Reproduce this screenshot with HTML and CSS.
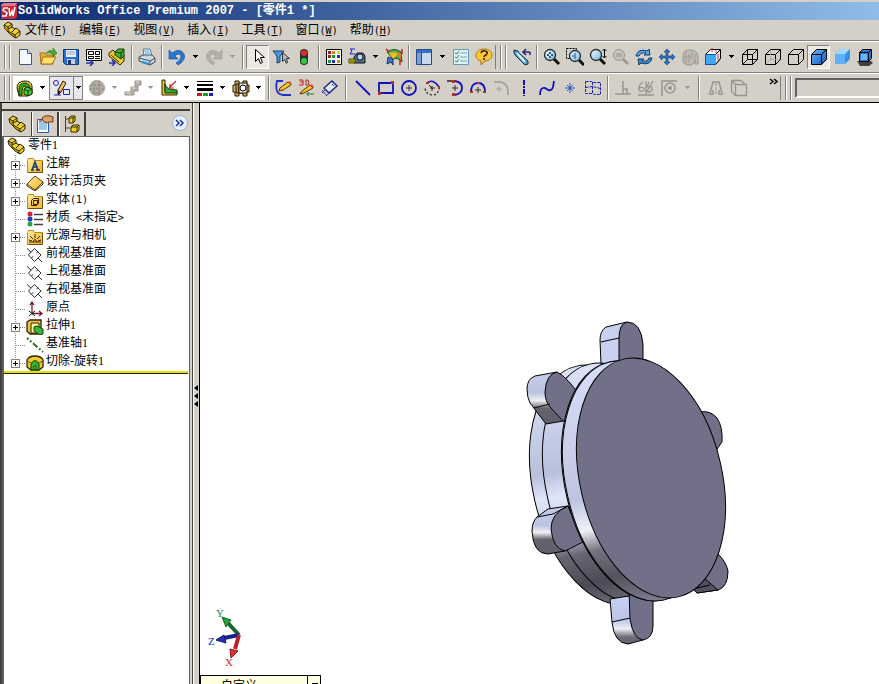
FILE: index.html
```html
<!DOCTYPE html>
<html lang="zh-CN">
    <head>
        <meta charset="UTF-8">
        <meta name="viewport" content="width=device-width, initial-scale=1.0">
        <title>SolidWorks Office Premium 2007</title>
        <link rel="stylesheet" href="styles.css">
    </head>
    <body>
        <svg class="defs" width="0" height="0" aria-hidden="true">
            <defs>
                <linearGradient id="gold" x1="0" y1="0" x2="1" y2="1"><stop offset="0" stop-color="#fff0a0"/><stop offset="1" stop-color="#f0b020"/></linearGradient>
                <linearGradient id="glass" x1="0" y1="0" x2="1" y2="1"><stop offset="0" stop-color="#f4fcff"/><stop offset="1" stop-color="#78b4dc"/></linearGradient>
                <linearGradient id="blue" x1="0" y1="0" x2="1" y2="1"><stop offset="0" stop-color="#68b4f8"/><stop offset="1" stop-color="#1458c0"/></linearGradient>
            </defs>
            <symbol id="part" viewBox="0 0 18 18">
                <path d="M1 4l4-3 4 2v3l3 2 1-1 4 3v4l-4 3-5-3-6-6z" fill="#f0d030" stroke="#282000"/>
                <path d="M1 4l4 2 4-3M5 6v4l7 4 5-4M5 8l4-2M12 14v3M9 11l3-3" fill="none" stroke="#282000"/>
                <path d="M2 6l2 1v3l-2-2zM6 11l5 3v1l-5-3z" fill="#a88000"/>
            </symbol>
            <symbol id="caret" viewBox="0 0 7 4"><path d="M1 0h5v1H5v1H4v1H3V2H2V1H1z"/></symbol>
            <symbol id="folder" viewBox="0 0 18 16">
                <path d="M1.500 3.500l1-2h5l1 2h8v12h-15z" fill="url(#gold)" stroke="#c08818"/>
                <path d="M2 15.500h14.500V4" fill="none" stroke="#705010"/>
            </symbol>
            <symbol id="plane" viewBox="0 0 18 16">
                <path d="M2.500 8l6-6.500 6.500 6.500-6.500 6.500z" fill="#fff" stroke="#303030"/>
                <path d="M1 1.500l4 3.500M12 11l4 4M5.500 11l6.500-6.500" fill="none" stroke="#303030"/>
                <path d="M6 8l3-3 3 3-3 3z" fill="#fff"/>
            </symbol>
            <symbol id="cube" viewBox="0 0 18 18"><path d="M1.500 6.500l5-5h10v10l-5 5h-10zM1.500 6.500h10v10M11.500 6.500l5-5" stroke="currentColor"/></symbol>
            <symbol id="lens" viewBox="0 0 18 18">
                <path d="M11 11l5 5" stroke="#101010" stroke-width="3"/>
                <circle cx="7" cy="7" r="5.500" fill="url(#glass)" stroke="#182838" stroke-width="1.300"/>
            </symbol>
        </svg>

        <header class="titlebar">
            <svg width="16" height="16" viewBox="0 0 16 16"><path d="M0 2l3-2h13v14l-2 2H0z" fill="#c82838"/><path d="M0 2l3-2h13l-2 3H0z" fill="#e87880"/><path d="M7 5H3L2 7l4 3-1 3H1M8 5l1 8 2-5 1 5 2-9" fill="none" stroke="#fff" stroke-width="1.500"/></svg>
            <h1>SolidWorks Office Premium 2007 - [零件1 *]</h1>
        </header>

        <nav class="menubar">
            <svg width="18" height="18"><use href="#part"/></svg>
            <button>文件<span class="key">(<u>F</u>)</span></button>
            <button>编辑<span class="key">(<u>E</u>)</span></button>
            <button>视图<span class="key">(<u>V</u>)</span></button>
            <button>插入<span class="key">(<u>I</u>)</span></button>
            <button>工具<span class="key">(<u>T</u>)</span></button>
            <button>窗口<span class="key">(<u>W</u>)</span></button>
            <button>帮助<span class="key">(<u>H</u>)</span></button>
        </nav>

        <!-- standard + view toolbars -->
        <div class="toolbar">
            <div class="grip"></div>
            <button class="tool" aria-label="新建"><svg viewBox="0 0 18 18"><path d="M3.500 1.500h8l4 4v11h-12z" fill="#f4f8ff" stroke="#405880"/><path d="M11.500 1.500v4h4" fill="#c8d8f0" stroke="#405880"/></svg></button>
            <button class="tool" aria-label="打开"><svg viewBox="0 0 18 18"><path d="M1 5h5l1 2h7v9H2z" fill="#e8b030" stroke="#a87010"/><path d="M4 9h13l-4 7H2z" fill="#ffe070" stroke="#a87010"/><path d="M7 5q3-4 7-2V0l4 5-4 4V6q-4-2-7-1z" fill="#40b028" stroke="#207010" stroke-width=".5"/></svg></button>
            <button class="tool" aria-label="保存"><svg viewBox="0 0 18 18"><path d="M1.500 1.500h15v15h-13l-2-2z" fill="#2870d0" stroke="#103880"/><path d="M4 2h10v7H4z" fill="#e8f0ff"/><path d="M5 4h8M5 6h8" stroke="#90a8d0"/><path d="M5 11h8v5H5z" fill="#c8d0e0"/><path d="M6 12h3v4H6z" fill="#183878"/></svg></button>
            <button class="tool" aria-label="从零件制作工程图"><svg viewBox="0 0 18 18"><path d="M1.500 1.500h15v11h-15z" fill="#fff" stroke="#000"/><path d="M3.500 3.500h5v3h-5zM10.500 3.500h4v3h-4zM3.500 8.500h5v2h-5zM10 8.500h5M10 10.500h5" fill="#fff" stroke="#000"/><path d="M1 15h6M5 12l3 3-3 3" fill="none" stroke="#2030b0" stroke-width="1.500"/></svg></button>
            <button class="tool" aria-label="从零件制作装配体"><svg viewBox="0 0 18 18"><path d="M1 5l4-3 6 6 5-1v6l-4 4-11-9z" fill="#f0c828" stroke="#302000"/><path d="M7 4l3-3h6v7l-3 3-6-4z" fill="#48b030" stroke="#104008"/><path d="M7 4l6 1v6M13 5l3-4M3 7l8 7" fill="none" stroke="#104008"/><path d="M1 15h5M4 12l3 3-3 3" fill="none" stroke="#2030b0" stroke-width="1.500"/></svg></button>
            <div class="sep"></div>
            <button class="tool" aria-label="打印"><svg viewBox="0 0 18 18"><path d="M6 8l-1-7h7l2 7" fill="#e8f8ff" stroke="#5080a0"/><path d="M6 3h5M7 5h5" stroke="#58a0d0"/><path d="M1 9l4-2h9l3 3v4l-5 3-11-4z" fill="#c8d8e0" stroke="#405060"/><path d="M1 10l11 3 5-3M12 13v4" fill="none" stroke="#405060"/><path d="M4 14l7 2" stroke="#2890d0" stroke-width="2"/></svg></button>
            <div class="sep"></div>
            <button class="tool" aria-label="撤消"><svg viewBox="0 0 18 18"><path d="M1 2l3 3q5-4 9-2 5 3 3 8-2 4-6 6l-2-2q5-3 5-7-2-4-6 0l3 3H1z" fill="#2878d0" stroke="#1850a0" stroke-width=".7"/></svg></button>
            <button class="drop" aria-label="撤消列表"><svg><use href="#caret"/></svg></button>
            <button class="tool" aria-label="重做" disabled><svg viewBox="0 0 18 18"><path d="M17 2l-3 3q-5-4-9-2-5 3-3 8 2 4 6 6l2-2q-5-3-5-7 2-4 6 0l-3 3h9z" fill="#b4b0a8" stroke="#a09c94" stroke-width=".7"/></svg></button>
            <button class="drop" aria-label="重做列表" disabled><svg><use href="#caret"/></svg></button>
            <div class="sep"></div>
            <button class="tool pressed" aria-label="选择"><svg viewBox="0 0 18 18"><path d="M6.500 1.500v12l3-3 2 5 2-1-2-5h4z" fill="#fff" stroke="#000"/></svg></button>
            <button class="tool" aria-label="选择过滤器"><svg viewBox="0 0 18 18"><path d="M1 3h11l-4 5v6l-3 1V8z" fill="#4898d8" stroke="#104080"/><path d="M10.500 4.500v9l2-2 2 4 1-1-1-4h3z" fill="#b0b8c0" stroke="#303030"/></svg></button>
            <button class="tool" aria-label="重建模型"><svg viewBox="0 0 18 18"><rect x="5" y="1" width="8" height="16" rx="4" fill="#283028"/><circle cx="9" cy="5" r="3" fill="#d83030"/><circle cx="9" cy="13" r="3" fill="#30c840"/></svg></button>
            <div class="sep"></div>
            <button class="tool" aria-label="编辑颜色"><svg viewBox="0 0 18 18"><path d="M1.500 1.500h15v15h-15z" fill="#fff" stroke="#000"/><path d="M3 3h3v3H3zM3 7h3v3H3z" fill="#a02020"/><path d="M7 3h3v3H7zM12 12h3v3h-3z" fill="#e08010"/><path d="M12 3h3v3h-3z" fill="#e0d020"/><path d="M7 7h3v3H7zM3 12h3v3H3z" fill="#10a030"/><path d="M12 7h3v3h-3zM7 12h3v3H7z" fill="#2030d0"/></svg></button>
            <button class="tool" aria-label="测量"><svg viewBox="0 0 18 18"><path d="M7 1H2l2 2-2 3h5" fill="none" stroke="#2020c0"/><path d="M6 9l3-4h6l2 3v7H6z" fill="#506880" stroke="#101820"/><circle cx="12" cy="9" r="3" fill="#b8d8f0" stroke="#101820"/><path d="M1 11h6v4H1z" fill="#e8d020" stroke="#404000"/><path d="M3 12v2M5 12v2" stroke="#404000"/></svg></button>
            <button class="drop" aria-label="测量列表"><svg><use href="#caret"/></svg></button>
            <button class="tool" aria-label="曲面分析"><svg viewBox="0 0 18 18"><path d="M2 4q7-5 14 0l1 10q-4-5-9-3z" fill="#48b048" stroke="#205020"/><path d="M4 5q6-2 9 1l-5 5z" fill="#f0c020"/><path d="M11 4l5 2v7z" fill="#e08020"/><path d="M1 1l3 3M17 1v5M15 11v6" stroke="#c02020" stroke-width="1.500"/><path d="M3 9l5 2v6l-2-3-4 2z" fill="#4078d0" stroke="#203060"/></svg></button>
            <div class="sep"></div>
            <button class="tool" aria-label="窗格"><svg viewBox="0 0 18 18"><path d="M1.500 1.500h15v15h-15z" fill="#c8d8f0" stroke="#284880"/><path d="M2 2h14v3H2z" fill="#3870c0"/><path d="M2 5h4v11H2z" fill="#78a0d8"/><path d="M6.500 5v11" stroke="#284880"/></svg></button>
            <button class="drop" aria-label="窗格列表"><svg><use href="#caret"/></svg></button>
            <button class="tool" aria-label="选项"><svg viewBox="0 0 18 18"><path d="M1.500 1.500h15v15h-15z" fill="#e0f0f8" stroke="#6898b8"/><path d="M3 5l2 1 2-3M3 9l2 1 2-3M3 13l2 1 2-3" fill="none" stroke="#289048"/><path d="M8 5h7M8 9h7M8 13h7" stroke="#70a0c0"/></svg></button>
            <button class="tool" aria-label="帮助"><svg viewBox="0 0 18 18"><path d="M9 1c10 0 11 11 1 12l-4 4v-4C-2 11 0 1 9 1z" fill="#f8c838" stroke="#a87010"/><path d="M6 5q1-3 4-2 4 1 1 4-2 1-2 2M9 10v2" fill="none" stroke="#402000" stroke-width="1.700"/></svg></button>
            <div class="grip raised"></div>
            <button class="tool" aria-label="上一视图"><svg viewBox="0 0 18 18"><path d="M1 2l4 1 1 2 9 8v3l-3 1-9-9-2-3z" fill="#58a0d0" stroke="#102840"/><path d="M4 5l8 9" stroke="#d0f0ff" stroke-width="2"/><path d="M17 4h-6M13 1l-3 3 3 3M17 4v3" fill="none" stroke="#282878" stroke-width="1.500"/></svg></button>
            <div class="sep"></div>
            <button class="tool" aria-label="整屏显示全图"><svg viewBox="0 0 18 18"><use href="#lens"/><path d="M5 5h4v4H5z" fill="#c8e8f8"/><path d="M7 4v2M7 8v2M4 7h2M8 7h2" stroke="#183048" stroke-width="1.500"/></svg></button>
            <button class="tool" aria-label="局部放大"><svg viewBox="0 0 18 18"><path d="M.5.500h10v10H.5z" fill="none" stroke="#000" stroke-dasharray="2 1"/><g transform="translate(2 1)"><use href="#lens" width="18" height="18"/></g><path d="M9 5v6M6 8h2" stroke="#185080"/></svg></button>
            <button class="tool" aria-label="放大或缩小"><svg viewBox="0 0 18 18"><use href="#lens"/><path d="M15.500 1v9M13.500 3l2-2 2 2M13.500 8l2 2 2-2" fill="none" stroke="#000"/></svg></button>
            <button class="tool" aria-label="放大选取范围" disabled><svg viewBox="0 0 18 18"><path d="M11 11l5 5" stroke="#a09c94" stroke-width="3"/><circle cx="7" cy="7" r="5.500" fill="#c8c4bc" stroke="#989488"/><path d="M4 6h6M4 8h6" stroke="#989488"/></svg></button>
            <button class="tool" aria-label="旋转视图"><svg viewBox="0 0 18 18"><path d="M1 8q2-8 11-5l2-2 1 6H9l2-2Q5 4 4 8z" fill="#58a8e8" stroke="#103868"/><path d="M17 10q-2 8-11 5l-2 2-1-6h6l-2 2q6 1 7-3z" fill="#3888d0" stroke="#103868"/></svg></button>
            <button class="tool" aria-label="平移"><svg viewBox="0 0 18 18"><path d="M9 1l3 3h-2v4h4V6l3 3-3 3v-2h-4v4h2l-3 3-3-3h2v-4H4v2L1 9l3-3v2h4V4H6z" fill="#2878c8" stroke="#103868" stroke-width=".6"/></svg></button>
            <button class="tool" aria-label="三维工程图视图" disabled><svg viewBox="0 0 18 18"><path d="M2 8q0-6 7-6t8 6v8h-3v-4l-3 5H6L2 14z" fill="#c0bcb4" stroke="#989488"/><path d="M5 4v11M8 6v9M11 4v7M14 6v7M2 9h9" stroke="#a09c94"/></svg></button>
            <button class="tool" aria-label="标准视图"><svg viewBox="0 0 18 18"><path d="M1.500 6.500l5-5h10v9l-5 6h-10z" fill="#fff" stroke="#000"/><path d="M1.500 6.500h10v10h-10z" fill="#40a8f8" stroke="#1050b0"/><path d="M11.500 6.500l5-5v9l-5 6" fill="#d8e8f8" stroke="#000"/><path d="M8 0v4M12 2v3M14 6v6" stroke="#e03040"/></svg></button>
            <button class="drop" aria-label="标准视图列表"><svg><use href="#caret"/></svg></button>
            <button class="tool" aria-label="线架图"><svg viewBox="0 0 18 18" fill="none"><use href="#cube"/><path d="M6.500 2v9.500h10M6.500 11.500l-5 5" stroke="#000"/></svg></button>
            <button class="tool" aria-label="隐藏线可见"><svg viewBox="0 0 18 18" fill="none"><use href="#cube"/><path d="M6.500 2v9.500h10M6.500 11.500l-5 5" stroke="#888" stroke-dasharray="1 1"/></svg></button>
            <button class="tool" aria-label="消除隐藏线"><svg viewBox="0 0 18 18" fill="none"><use href="#cube"/></svg></button>
            <button class="tool pressed" aria-label="带边线上色"><svg viewBox="0 0 18 18" fill="url(#blue)"><use href="#cube"/></svg></button>
            <button class="tool" aria-label="上色"><svg viewBox="0 0 18 18"><path d="M2 6l5-5h10v10l-5 5H2z" fill="#3890e8"/><path d="M2 6l5-5h10l-5 5z" fill="#a0d8ff"/><path d="M2 6h10v10H2z" fill="#60b0f8"/></svg></button>
            <button class="tool" aria-label="上色模式中的阴影"><svg viewBox="0 0 18 18"><path d="M1 13h14l2 2-4 3H4z" fill="#404040"/><path d="M3.500 4.500l3-3h9v9l-3 3h-9z" fill="#2878d0" stroke="#000"/><path d="M3.500 4.500h9v9M12.500 4.500l3-3" fill="none" stroke="#000"/><path d="M5 6h6v6H5z" fill="#68b8f8"/></svg></button>
        </div>

        <!-- command manager + sketch toolbars -->
        <div class="toolbar second">
            <div class="grip"></div>
            <div class="manager">
                <div class="pair">
                    <button class="tool" aria-label="特征"><svg viewBox="0 0 18 18"><path d="M1 9q0-7 8-7 6 0 7 5v8l-5 2H3z" fill="#f0d030" stroke="#202000"/><path d="M3 10q0-6 6-6 5 1 5 5l-4 1q0-3-2-3-2 1-2 5v4H3z" fill="#38a028" stroke="#083808"/><path d="M8 10l3-2 5 2v5l-4 2-4-2z" fill="#58c840" stroke="#083808"/><path d="M8 10l4 2v5M12 12l4-2" fill="none" stroke="#083808"/></svg></button>
                    <button class="drop" aria-label="特征列表"><svg><use href="#caret"/></svg></button>
                </div>
                <div class="pair active">
                    <button class="tool" aria-label="草图"><svg viewBox="0 0 18 18"><circle cx="4" cy="4" r="2.500" fill="none" stroke="#2020c0"/><path d="M11.500 10.500h6v5h-6zM2 16h7" fill="none" stroke="#2020c0"/><path d="M6 11l5-9 3 2-5 9-3 3z" fill="#f0c060" stroke="#301800"/><path d="M6 11l3 2-3 3z" fill="#301800"/></svg></button>
                    <button class="drop" aria-label="草图列表"><svg><use href="#caret"/></svg></button>
                </div>
                <div class="pair">
                    <button class="tool" aria-label="曲面" disabled><svg viewBox="0 0 18 18"><circle cx="9" cy="9" r="7.500" fill="#b0aca4" stroke="#989488" stroke-dasharray="3 1"/><path d="M3 6h12M2 10h14M5 14h8M6 2v14M11 2v14" stroke="#8c887c" stroke-dasharray="2 1"/></svg></button>
                    <button class="drop" aria-label="曲面列表" disabled><svg><use href="#caret"/></svg></button>
                </div>
                <div class="pair">
                    <button class="tool" aria-label="钣金" disabled><svg viewBox="0 0 18 18"><path d="M1 13h6V8h4V2h6v4h-3v6h-4v4H1z" fill="#b4b0a8" stroke="#989488"/><path d="M12 3h3M8 9h3M2 14h5" stroke="#e8e4dc"/></svg></button>
                    <button class="drop" aria-label="钣金列表" disabled><svg><use href="#caret"/></svg></button>
                </div>
                <div class="pair">
                    <button class="tool" aria-label="模具工具"><svg viewBox="0 0 18 18"><path d="M2 1h3v12h12v3H2z" fill="#e8c820" stroke="#302800"/><path d="M5 5q1 6 12 6v3H5z" fill="#38a830" stroke="#083808"/><path d="M9 9l7-7M10 5v4h4" fill="none" stroke="#d02020" stroke-width="1.200"/></svg></button>
                    <button class="drop" aria-label="模具列表"><svg><use href="#caret"/></svg></button>
                </div>
                <div class="pair">
                    <button class="tool" aria-label="线型"><svg viewBox="0 0 18 18"><path d="M1 2.500h16" stroke="#000"/><path d="M1 6h16" stroke="#000" stroke-width="2"/><path d="M1 10.500h16" stroke="#000" stroke-width="3"/><path d="M1 14h5v3H1z" fill="#c02020"/><path d="M7 14h5v3H7z" fill="#20a020"/><path d="M13 14h4v3h-4z" fill="#2020c0"/></svg></button>
                    <button class="drop" aria-label="线型列表"><svg><use href="#caret"/></svg></button>
                </div>
                <div class="pair">
                    <button class="tool" aria-label="装配体"><svg viewBox="0 0 18 18"><path d="M3 2h4v3h4V2h4v4h2v7h-2v4h-4v-3H7v3H3v-4H1V6h2z" fill="#e0b060" stroke="#201800"/><path d="M4 5h3v9H4z" fill="#b89058" stroke="#201800"/><path d="M7 4h8v10H7z" fill="#e8e8e8" stroke="#201800"/><circle cx="11" cy="9" r="3" fill="#fff" stroke="#000"/></svg></button>
                    <button class="drop" aria-label="装配体列表"><svg><use href="#caret"/></svg></button>
                </div>
            </div>
            <div class="sep"></div>
            <button class="tool" aria-label="草图绘制"><svg viewBox="0 0 18 18"><path d="M8 2H2q-3 13 6 14h8" fill="none" stroke="#2030c8" stroke-width="1.800"/><path d="M5 9l8-6 3 3-8 5-4 1z" fill="#f8c828" stroke="#583000"/><path d="M13 3l2-1 2 3-1 1z" fill="#e05040"/></svg></button>
            <button class="tool" aria-label="3D草图"><svg viewBox="0 0 18 18"><path d="M1 1h4v5H1M2 3h3M8 1v5h2l1-2-1-3z" fill="none" stroke="#c02020"/><path d="M3 13l9-7 3 3-9 5-4 1z" fill="#f8c828" stroke="#583000"/><path d="M10 17v-4M8 15h8" stroke="#208040"/><path d="M12 6l2-1 2 3-1 1z" fill="#e05040"/></svg></button>
            <button class="tool" aria-label="智能尺寸"><svg viewBox="0 0 18 18"><path d="M3 9l8-7 5 5-8 7z" fill="#e0e8f8" stroke="#182878" stroke-width="1.400"/><path d="M1 11l5 6M1 14l4-4M6 16l5-4M11 5l2 2" fill="none" stroke="#2838a8"/></svg></button>
            <div class="sep wide"></div>
            <button class="tool" aria-label="直线"><svg viewBox="0 0 18 18"><path d="M2 2l14 14" stroke="#1010c0" stroke-width="1.800"/></svg></button>
            <button class="tool" aria-label="矩形"><svg viewBox="0 0 18 18"><path d="M2 4h14v10H2z" fill="none" stroke="#1010c0" stroke-width="1.800"/><path d="M14 2h3v3h-3zM1 13h3v3H1z" fill="#b03030"/></svg></button>
            <button class="tool" aria-label="圆"><svg viewBox="0 0 18 18"><circle cx="9" cy="9" r="7" fill="none" stroke="#1010c0" stroke-width="1.800"/><path d="M9 6v6M6 9h6" stroke="#303030"/></svg></button>
            <button class="tool" aria-label="圆心圆弧"><svg viewBox="0 0 18 18"><path d="M4 4q6-5 12 4" fill="none" stroke="#1010c0" stroke-width="1.600"/><path d="M16 8q0 8-7 8-7-1-7-8" fill="none" stroke="#303030" stroke-dasharray="2 2" stroke-width="1.400"/><path d="M6 6l4 4M9 7v5M7 9h5" stroke="#303030"/><path d="M3 3h3v2H3zM15 7h2v3h-2z" fill="#b03030"/></svg></button>
            <button class="tool" aria-label="切线弧"><svg viewBox="0 0 18 18"><path d="M1 2h8" stroke="#303030" stroke-width="1.600"/><path d="M9 2q7 1 7 7 0 6-8 7" fill="none" stroke="#1010c0" stroke-width="1.800"/><path d="M9 6v6M6 9h6" stroke="#303030"/><path d="M6 1h3v3H6zM6 14h3v3H6z" fill="#b03030"/></svg></button>
            <button class="tool" aria-label="三点圆弧"><svg viewBox="0 0 18 18"><path d="M2 13q0-9 7-9t7 9" fill="none" stroke="#1010c0" stroke-width="1.800"/><path d="M9 8v6M6 11h6" stroke="#303030"/><path d="M1 12h3v2H1zM14 12h3v2h-3zM8 3h3v2H8z" fill="#b03030"/></svg></button>
            <button class="tool" aria-label="绘制圆角" disabled><svg viewBox="0 0 18 18"><path d="M2 3h6q7 1 8 8v5" fill="none" stroke="#a8a49c" stroke-width="1.800"/><path d="M7 7v6M4 10h6" stroke="#a8a49c"/></svg></button>
            <button class="tool" aria-label="中心线"><svg viewBox="0 0 18 18"><path d="M9 1v16" stroke="#1010c0" stroke-width="2" stroke-dasharray="5 1 2 1"/></svg></button>
            <button class="tool" aria-label="样条曲线"><svg viewBox="0 0 18 18"><path d="M2 16q0-8 5-7 6 5 8-1l1-6" fill="none" stroke="#1010c0" stroke-width="1.800"/></svg></button>
            <button class="tool" aria-label="点"><svg viewBox="0 0 18 18"><path d="M9 4v10M4 9h10M6 6l6 6M12 6l-6 6" stroke="#2858c0"/></svg></button>
            <button class="tool" aria-label="基准面"><svg viewBox="0 0 18 18"><path d="M1.500 2.500h6l2 1h7v12h-6l-2-1h-7zM1.500 8.500l7-1 8 2M8.500 3v11" fill="none" stroke="#2020b0" stroke-dasharray="3 1"/></svg></button>
            <div class="sep"></div>
            <button class="tool" aria-label="添加几何关系" disabled><svg viewBox="0 0 18 18"><path d="M1 15h16M9 2v13M9 10h4v5" fill="none" stroke="#98948c" stroke-width="1.500"/></svg></button>
            <button class="tool" aria-label="显示几何关系" disabled><svg viewBox="0 0 18 18"><path d="M1 16h16M9 2v13M6 3q-5 3-4 8 3 3 5 0 0-4-5-2M12 3l-2 5q6-2 5 3-3 4-6 0M16 2l-7 12" fill="none" stroke="#98948c" stroke-width="1.300"/></svg></button>
            <button class="tool" aria-label="等距实体" disabled><svg viewBox="0 0 18 18"><path d="M2 16V2h15M1 16h2" fill="none" stroke="#98948c" stroke-width="1.500"/><circle cx="10" cy="9" r="5" fill="none" stroke="#98948c" stroke-width="1.500"/><circle cx="10" cy="9" r="2" fill="#98948c"/></svg></button>
            <button class="drop" aria-label="等距列表" disabled><svg><use href="#caret"/></svg></button>
            <div class="sep wide"></div>
            <button class="tool" aria-label="镜向实体" disabled><svg viewBox="0 0 18 18"><path d="M9 4v12" stroke="#98948c" stroke-dasharray="3 1"/><path d="M2 15h5M11 15h5M3 14l3-11h6l3 11M6 11v3M12 11v3" fill="none" stroke="#98948c" stroke-width="1.500"/></svg></button>
            <button class="tool" aria-label="转换实体" disabled><svg viewBox="0 0 18 18"><path d="M1.500 1.500h9l4 3M1.500 1.500v11l4 4M5.500 5.500h11v11h-11zM1.500 1.500l4 4" fill="none" stroke="#98948c" stroke-width="1.300"/></svg></button>
            <button class="more" aria-label="更多按钮"><svg viewBox="0 0 9 7"><path d="M1 1l3 2.500L1 6M5 1l3 2.500L5 6" fill="none" stroke="#000" stroke-width="1.500"/></svg></button>
            <div class="grip raised"></div>
            <input class="field" type="text" aria-label="图层" disabled>
        </div>

        <main class="work">
            <aside class="panel">
                <div class="tabs">
                    <button class="tab current" aria-label="特征管理器"><svg width="18" height="18"><use href="#part"/></svg></button>
                    <button class="tab" aria-label="属性管理器"><svg width="18" height="18" viewBox="0 0 18 18"><path d="M1.500 4.500h11v13h-11z" fill="#fff" stroke="#2858a0"/><path d="M3 8h8M3 10h8M3 12h8M3 14h8" stroke="#3890d8"/><path d="M6 3q4-4 11-1v5q-4-1-6 1L7 6z" fill="#e0a068" stroke="#683818"/><path d="M3 6h3" stroke="#101010"/></svg></button>
                    <button class="tab" aria-label="配置管理器"><svg width="18" height="18" viewBox="0 0 18 18"><path d="M2.500 1v16M3 4h4M3 13h4" stroke="#404040"/><path d="M6 3l2-2h4v5l-2 2H6zM8 12l2-2h6v5l-2 2H8z" fill="#f0d020" stroke="#302800"/><path d="M6 3h4v5M10 3l2-2M8 12h6v5M14 12l2-2" fill="none" stroke="#302800"/></svg></button>
                    <button class="expand" aria-label="展开"><svg width="16" height="16" viewBox="0 0 16 16"><circle cx="8" cy="8" r="7.500" fill="#e8f0fc" stroke="#98b0d8"/><path d="M4 5l3 3-3 3M8 5l3 3-3 3" fill="none" stroke="#1838a0" stroke-width="1.500"/></svg></button>
                </div>
                <div class="treebox">
                    <div class="root"><svg width="18" height="18"><use href="#part"/></svg><span>零件1</span></div>
                    <ul class="tree">
                        <li><button class="plus" aria-label="展开注解"></button><svg viewBox="0 0 18 16"><use href="#folder"/><path d="M5 13h3M10 13h4M6 13l3-8 3 8M7 10h4" fill="none" stroke="#103880" stroke-width="1.500"/></svg><span>注解</span></li>
                        <li><button class="plus" aria-label="展开设计活页夹"></button><svg viewBox="0 0 18 16"><path d="M1 9v2l8 5 8-7V7" fill="#fff" stroke="#403000"/><path d="M1 9l8-8 8 6-8 8z" fill="url(#gold)" stroke="#604000"/></svg><span>设计活页夹</span></li>
                        <li><button class="plus" aria-label="展开实体"></button><svg viewBox="0 0 18 16"><use href="#folder"/><path d="M5.500 7.500l2-2h5v5l-2 2h-5zM7.500 7.500h4v4h-4z" fill="none" stroke="#382000"/></svg><span>实体<span class="key">(1)</span></span></li>
                        <li><i></i><svg viewBox="0 0 18 16"><path d="M8 3.500h9M8 8.500h9M8 13.500h9" stroke="#404040" stroke-width="1.500"/><circle cx="4" cy="3" r="2.500" fill="#d02828"/><circle cx="4" cy="8" r="2.500" fill="#2038c8"/><circle cx="4" cy="13" r="2.500" fill="#28a048"/></svg><span>材质<span class="key"> &lt;</span>未指定<span class="key">&gt;</span></span></li>
                        <li><button class="plus" aria-label="展开光源与相机"></button><svg viewBox="0 0 18 16"><use href="#folder"/><path d="M3 13h12M9 5v4M4 7l3 3M14 7l-3 3M3 11l3 1M15 11l-3 1M7 13q2-5 4 0" fill="none" stroke="#402000"/></svg><span>光源与相机</span></li>
                        <li><i></i><svg viewBox="0 0 18 16"><use href="#plane"/></svg><span>前视基准面</span></li>
                        <li><i></i><svg viewBox="0 0 18 16"><use href="#plane"/></svg><span>上视基准面</span></li>
                        <li><i></i><svg viewBox="0 0 18 16"><use href="#plane"/></svg><span>右视基准面</span></li>
                        <li><i></i><svg viewBox="0 0 18 16"><path d="M6 12V2M4 4l2-3 2 3M6 12.500h9M13 10l3 2.500-3 2.500" fill="none" stroke="#801828" stroke-width="1.300"/><path d="M3 10l6 5M9 10l-6 5" stroke="#101010"/></svg><span>原点</span></li>
                        <li><button class="plus" aria-label="展开拉伸"></button><svg viewBox="0 0 18 16"><path d="M1 3l3-2h11v9l-3 5H4l-3-3z" fill="#e8c840" stroke="#302000" stroke-width="1.300"/><path d="M5 4h8v10H5z" fill="#fff0a0" stroke="#302000"/><path d="M8 8l3-1 6 3v5l-3 1-6-4z" fill="#40b040" stroke="#084808"/></svg><span>拉伸1</span></li>
                        <li><i></i><svg viewBox="0 0 18 16"><path d="M1 1l16 14" stroke="#287028" stroke-width="2" stroke-dasharray="2 2 2 2 6 2"/></svg><span>基准轴1</span></li>
                        <li><button class="plus" aria-label="展开切除-旋转"></button><svg viewBox="0 0 18 16"><path d="M1 5q2-4 8-4t8 4v7l-4 3H5l-4-3z" fill="#f0c830" stroke="#302000" stroke-width="1.300"/><path d="M1 6q8 5 16 0" fill="none" stroke="#705000"/><path d="M5 15V9q4-7 8 0v6h-3v-4H8v4z" fill="#38b038" stroke="#084808"/></svg><span>切除-旋转1</span></li>
                    </ul>
                    <div class="rollback"></div>
                </div>
            </aside>
            <div class="splitter"><svg width="5" height="24" viewBox="0 0 5 24"><path d="M4 1v6L0 4zM4 9v6l-4-3zM4 17v6l-4-3z"/></svg></div>
            <section class="view">
                <svg class="model" viewBox="200 103 679 581">
                    <defs>
                        <linearGradient id="body" x1="0" y1="0" x2="0" y2="1"><stop offset="0" stop-color="#dce2f6"/><stop offset=".4" stop-color="#b8c0dc"/><stop offset=".5" stop-color="#e0e6fa"/><stop offset=".66" stop-color="#c0c6dc"/><stop offset=".75" stop-color="#686674"/><stop offset=".88" stop-color="#4c4a56"/><stop offset="1" stop-color="#706e7a"/></linearGradient>
                        <linearGradient id="rim" x1="0" y1="0" x2="0" y2="1"><stop offset="0" stop-color="#d4dcf8"/><stop offset=".35" stop-color="#c8cee8"/><stop offset=".52" stop-color="#bcc4e0"/><stop offset=".65" stop-color="#f0f2fa"/><stop offset=".74" stop-color="#74727e"/><stop offset=".86" stop-color="#54525e"/><stop offset="1" stop-color="#807e90"/></linearGradient>
                        <linearGradient id="lobe" x1="0" y1="0" x2="0" y2="1"><stop offset="0" stop-color="#c4ccec"/><stop offset=".4" stop-color="#bcc4e0"/><stop offset=".55" stop-color="#f0f0f4"/><stop offset=".7" stop-color="#64626c"/><stop offset="1" stop-color="#605e6a"/></linearGradient>
                        <linearGradient id="foot" x1="0" y1="0" x2="0" y2="1"><stop offset="0" stop-color="#c8d2f4"/><stop offset=".5" stop-color="#bcc4e4"/><stop offset=".68" stop-color="#eceef4"/><stop offset=".85" stop-color="#706e7a"/><stop offset="1" stop-color="#605e6a"/></linearGradient>
                    </defs>
                    <g stroke="#000" stroke-linejoin="round">
                        <path d="M700 412q10-2 17 6 6 9 5 24l-5 7z" fill="#726f88"/>
                        <path d="M693 589l10-12 14-24q9 8 11 18 0 16-10 19l-21 3z" fill="#726f88"/>
                        <path d="M693 589l10-12 15 13-21 3z" fill="#54525e"/>
                        <path d="M693 589l17-4" fill="none"/>
                        <path d="M601 364l-1-24q0-9 6-13l21-5-5 42z" fill="#c8d2f0"/>
                        <path d="M619 364v-26q0-14 8-16 14 0 16 22v18z" fill="#726f88"/>
                        <path d="M601 342l18-4" fill="none"/>
                        <ellipse cx="0" cy="0" rx="71" ry="122" transform="translate(604 485) rotate(-13)" fill="url(#body)"/>
                        <ellipse cx="0" cy="0" rx="71" ry="122" transform="translate(617 483) rotate(-13)" fill="url(#body)"/>
                        <path d="M557 372l-22 4q-8 3-8 13 0 8 3 14l16 21 17-3z" fill="url(#lobe)"/>
                        <path d="M563 421l-13-14q-5-6-5-15 1-18 12-20 8 4 18 17l12 11-12 28z" fill="#726f88"/>
                        <path d="M534 408l16-4" fill="none"/>
                        <path d="M548 509l-11 8q-5 5-5 14 1 23 16 23l17-3 8-37-5-8z" fill="url(#lobe)"/>
                        <path d="M568 506q-17 7-17 23 2 20 14 22l18-9z" fill="#726f88"/>
                        <path d="M537 517l16-3 15-8" fill="none"/>
                        <path d="M610 599l19-3 14 44-15 4q-14-1-16-22z" fill="url(#foot)"/>
                        <path d="M629 590l1 29q3 20 13 21 10-2 10-14v-30z" fill="#726f88"/>
                        <path d="M612 622l18-4" fill="none"/>
                        <ellipse cx="0" cy="0" rx="71" ry="122" transform="translate(636 481) rotate(-13)" fill="url(#rim)"/>
                        <ellipse cx="0" cy="0" rx="71" ry="122" transform="translate(637 481) rotate(-13)" fill="url(#rim)"/>
                        <ellipse cx="0" cy="0" rx="71" ry="122" transform="translate(651 478) rotate(-13)" fill="#726f88"/>
                    </g>
                    <g fill="none" stroke-width="4">
                        <path d="M239 635l-11-12" stroke="#186828"/><path d="M222 617l9 3-5 7z" fill="#28a040" stroke="#186828" stroke-width="1"/>
                        <path d="M239 635l-15 3" stroke="#182090"/><path d="M216 640l8-5 2 8z" fill="#2030b0" stroke="#101870" stroke-width="1"/>
                        <path d="M239 635l-4 14" stroke="#b82028"/><path d="M231 658l-1-9 8 2z" fill="#e03038" stroke="#901018" stroke-width="1"/>
                    </g>
                    <g class="axis"><text x="216" y="617" fill="#208838">Y</text><text x="208" y="645" fill="#2028b0">Z</text><text x="225" y="666" fill="#d02830">X</text></g>
                </svg>
                <select class="config" aria-label="配置"><option>自定义</option></select>
            </section>
        </main>
    </body>
</html>
```

FILE: styles.css
```css
* {
    box-sizing: border-box;
}

body {
    margin: 0;
    height: 100vh;
    display: flex;
    flex-direction: column;
    overflow: hidden;
    background: #d4d0c8;
    color: #000;
    font: 12px/18px "Liberation Serif", "Noto Sans CJK SC", serif;
}

button {
    margin: 0;
    padding: 0;
    border: 0;
    background: none;
    color: inherit;
    font: inherit;
}

.defs {
    position: absolute;
}

.key {
    font: 10px "DejaVu Sans Mono", monospace;
    white-space: pre;
}

/* title and menu */
.titlebar {
    display: flex;
    align-items: center;
    gap: 1px;
    flex: none;
    height: 20px;
    padding-left: 1px;
    border-top: 2px solid #d4d0c8;
    background: linear-gradient(to right, #0a2870, #90bce8);
}

.titlebar h1 {
    margin: 0;
    color: #fff;
    font: bold 12px/18px "Liberation Mono", "Noto Sans CJK SC", monospace;
    white-space: nowrap;
}

.menubar {
    display: flex;
    align-items: center;
    gap: 12px;
    flex: none;
    height: 20px;
    padding-left: 3px;
}

.menubar svg {
    margin-right: -8px;
}

.menubar button {
    white-space: nowrap;
}

/* toolbars */
.toolbar {
    display: flex;
    align-items: center;
    flex: none;
    height: 32px;
    border-top: 1px solid #808080;
    box-shadow: inset 0 1px #fff;
    overflow: hidden;
}

.toolbar.second {
    height: 30px;
}

.grip {
    flex: none;
    width: 6px;
    height: 24px;
    margin: 0 3px 0 4px;
    border: solid #808080;
    border-width: 0 1px;
    box-shadow: inset 1px 0 #fff, 1px 0 #fff;
}

.grip.raised {
    margin: 0 4px 0 5px;
    box-shadow: inset 1px 0 #fff, 1px 0 #fff, -4px 0 #d4d0c8, -5px 0 #808080;
}

.tool {
    display: flex;
    flex: none;
    align-items: center;
    justify-content: center;
    width: 23px;
    height: 24px;
}

.tool svg {
    width: 18px;
    height: 18px;
}

.tool.pressed {
    border: 1px solid;
    border-color: #808080 #fff #fff #808080;
    background: #ebe8e2;
}

.drop {
    display: flex;
    flex: none;
    align-items: center;
    justify-content: center;
    width: 14px;
    height: 24px;
}

.drop svg {
    width: 7px;
    height: 4px;
}

.drop:disabled svg {
    fill: #a09c94;
}

.sep {
    flex: none;
    width: 7px;
    height: 24px;
    background: linear-gradient(to right, #808080 50%, #fff 50%) center / 2px 100% no-repeat;
}

.sep.wide {
    width: 10px;
}

.manager {
    display: flex;
    gap: 2px;
    flex: none;
    height: 24px;
    padding-right: 2px;
    background: #fff;
}

.pair {
    display: flex;
}

.pair .tool {
    width: 24px;
}

.pair .drop {
    width: 10px;
}

.pair.active {
    background: #e8e8ec;
    outline: 1px solid #808080;
    outline-offset: -1px;
}

.pair.active .drop {
    border-left: 1px solid #808080;
}

.more {
    flex: 0 0 9px;
    align-self: flex-start;
    margin: 5px 2px 0 19px;
}

.more svg {
    display: block;
    width: 9px;
    height: 7px;
}

.field {
    flex: 1 0 80px;
    height: 20px;
    border: 2px solid;
    border-color: #606060 #fff #fff #606060;
    background: #d4d0c8;
}

/* work area */
.work {
    display: flex;
    flex: 1;
    min-height: 0;
    border-top: 1px solid #000;
}

.panel {
    display: flex;
    flex-direction: column;
    flex: none;
    width: 193px;
    padding: 6px 2px 0 0;
    border: solid #404040;
    border-width: 0 1px 0 2px;
}

.tabs {
    display: flex;
    height: 27px;
    padding-top: 1px;
    border-top: 2px solid #404040;
}

.tab {
    display: flex;
    align-items: center;
    justify-content: center;
    width: 27px;
    border-right: 2px solid #404040;
    border-left: 1px solid #fff;
}

.tab.current {
    width: 30px;
    border-right-width: 1px;
}

.expand {
    height: 16px;
    margin: 3px 2px 0 auto;
}

.treebox {
    flex: 1;
    border: solid #606060;
    border-width: 1px 1px 0 2px;
    background: #fff;
}

.root {
    display: flex;
    gap: 3px;
    height: 18px;
    padding-left: 3px;
    line-height: 16px;
}

.tree {
    margin: 0;
    padding: 0 0 0 7px;
    list-style: none;
    line-height: 16px;
}

.tree li {
    display: flex;
    height: 18px;
    background: repeating-linear-gradient(#909090 0 1px, transparent 1px 2px) 4px 0 / 1px 100% no-repeat, repeating-linear-gradient(to right, #909090 0 1px, transparent 1px 2px) 5px 10px / 10px 1px no-repeat;
}

.tree li:last-child {
    background-size: 1px 11px, 10px 1px;
}

.tree svg {
    flex: none;
    width: 18px;
    height: 16px;
    margin: 2px 2px 0 6px;
}

.tree i {
    width: 9px;
}

.plus {
    width: 9px;
    height: 9px;
    margin-top: 6px;
    border: 1px solid #808080;
    background: linear-gradient(#000, #000) center / 5px 1px no-repeat, linear-gradient(#000, #000) center / 1px 5px no-repeat, #fff;
}

.root span,
.tree span {
    white-space: nowrap;
}

.rollback {
    height: 3px;
    margin-right: 1px;
    border-top: 2px solid #e8e000;
    border-bottom: 1px solid #202000;
}

.splitter {
    display: flex;
    align-items: flex-start;
    flex: none;
    width: 6px;
    padding-top: 281px;
    border-left: 1px solid #fff;
}

.view {
    position: relative;
    flex: 1;
    min-width: 0;
    overflow: hidden;
    border-left: 1px solid #000;
    background: #fff;
}

.model {
    display: block;
    width: 100%;
    height: auto;
}

.axis {
    font: 11px "Liberation Serif", serif;
}

/* sits over the bottom edge of the view and runs under it */
.config {
    position: absolute;
    left: 0;
    bottom: -11px;
    width: 121px;
    height: 20px;
    padding: 0 20px;
    border: 1px solid #000;
    border-radius: 0;
    appearance: none;
    background: linear-gradient(#000, #000) 106px 0 / 1px 100% no-repeat, linear-gradient(#000, #000) 111px 7px / 6px 2px no-repeat, #ffffe1;
    color: #000;
    font: 12px/18px "Noto Sans CJK SC", sans-serif;
}
```
